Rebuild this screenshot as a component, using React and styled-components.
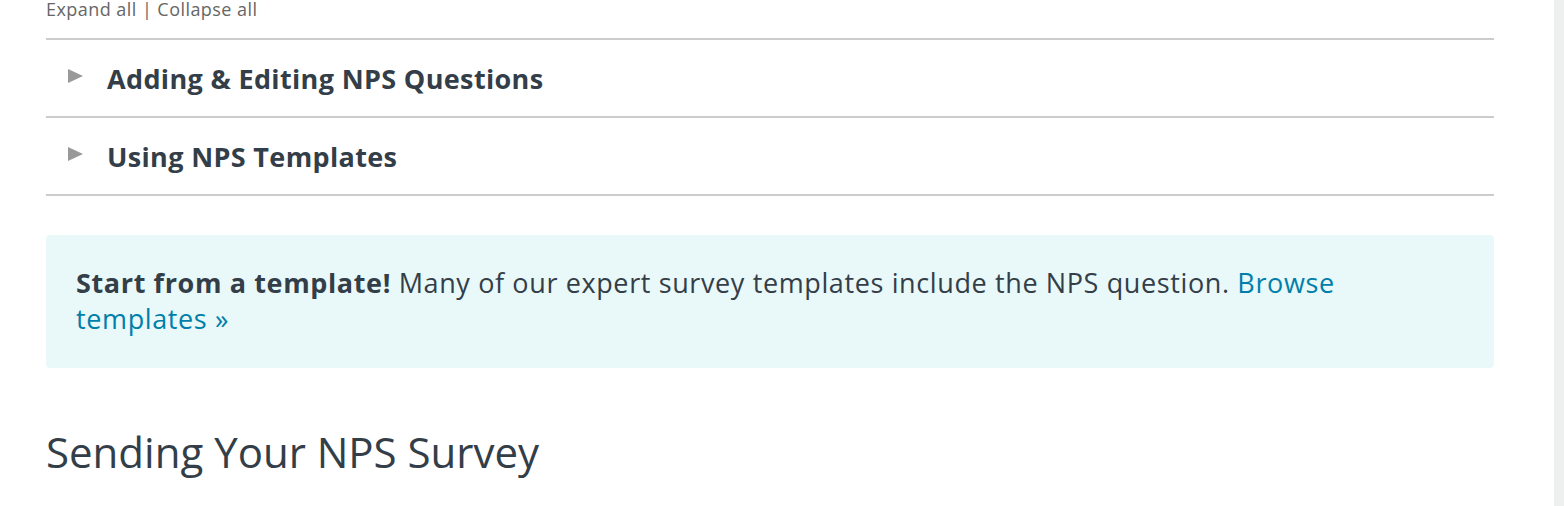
import React from "react";
import styled, { createGlobalStyle } from "styled-components";

const GlobalStyle = createGlobalStyle`
  body {
    margin: 0;
    background: #ffffff;
    font-family: "Open Sans", "Noto Sans", Arial, sans-serif;
  }
`;

const Page = styled.div`
  display: grid;
  grid-template-columns: 1fr 10px;
  height: 506px;
  overflow: hidden;
`;

const Content = styled.div`
  padding: 0 60px 0 46px;
`;

const ScrollStrip = styled.div`
  background: #eef0f0;
`;

const ToggleLinks = styled.div`
  font-size: 18px;
  line-height: 22px;
  margin-top: -2px;
  color: #666666;
  letter-spacing: 0.45px;
`;

const Accordion = styled.div`
  margin-top: 18px;
  border-top: 2px solid #cccccc;
`;

const Row = styled.div`
  display: flex;
  align-items: center;
  height: 76px;
  border-bottom: 2px solid #cccccc;
  padding-left: 22px;
`;

const Arrow = styled.span`
  width: 0;
  height: 0;
  border-top: 7px solid transparent;
  border-bottom: 7px solid transparent;
  border-left: 15px solid #999999;
  margin-right: 24px;
  margin-top: -5px;
`;

const RowTitle = styled.h3`
  margin: 0;
  font-size: 27px;
  font-weight: 700;
  color: #333e48;
  letter-spacing: 0.35px;
`;

const Callout = styled.div`
  margin-top: 39px;
  background: #e9f8f9;
  border-radius: 4px;
  padding: 30px 60px 31px 30px;
  font-size: 27px;
  line-height: 36px;
  letter-spacing: 0.62px;
  color: #333e48;
`;

const Link = styled.a`
  color: #007faa;
  text-decoration: none;
`;

const SectionTitle = styled.h2`
  margin: 60px 0 0;
  font-size: 42px;
  font-weight: 400;
  color: #333e48;
  line-height: 48px;
`;

const items = ["Adding & Editing NPS Questions", "Using NPS Templates"];

function App() {
  return (
    <>
      <GlobalStyle />
      <Page>
        <Content>
          <ToggleLinks>Expand all | Collapse all</ToggleLinks>
          <Accordion>
            {items.map((item) => (
              <Row key={item}>
                <Arrow />
                <RowTitle>{item}</RowTitle>
              </Row>
            ))}
          </Accordion>
          <Callout>
            <strong>Start from a template!</strong> Many of our expert survey
            templates include the NPS question.{" "}
            <Link href="#">Browse templates »</Link>
          </Callout>
          <SectionTitle>Sending Your NPS Survey</SectionTitle>
        </Content>
        <ScrollStrip />
      </Page>
    </>
  );
}

export default App;
